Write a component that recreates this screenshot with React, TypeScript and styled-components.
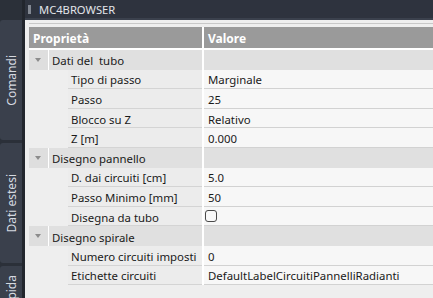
import React from "react";
import styled, { createGlobalStyle } from "styled-components";

const GlobalStyle = createGlobalStyle`
  html, body { margin: 0; padding: 0; overflow: hidden; }
  body { background: #2e333e; font-family: "Noto Sans", "Open Sans", sans-serif; }
`;

const Window = styled.div`
  display: flex;
  width: 433px;
  height: 298px;
  overflow: hidden;
`;

const Sidebar = styled.div`
  width: 22px;
  flex: none;
  display: flex;
  flex-direction: column;
  gap: 3px;
  padding-top: 20px;
  background: #2b3039;
  border-right: 3px solid #22262d;
`;

const Tab = styled.div<{ $h: number; $align?: string }>`
  height: ${(p) => p.$h}px;
  flex: none;
  background: #3a404c;
  border-radius: 3px 0 0 3px;
  display: flex;
  flex-direction: column;
  align-items: center;
  justify-content: ${(p) => p.$align || "center"};
  overflow: hidden;
`;

const TabText = styled.span<{ $pad?: number }>`
  writing-mode: vertical-rl;
  transform: rotate(180deg);
  color: #d5d9e0;
  font-size: 12px;
  white-space: nowrap;
  margin-top: ${(p) => p.$pad || 0}px;
`;

const Main = styled.div`
  flex: 1;
  display: flex;
  flex-direction: column;
  min-width: 0;
`;

const TitleBar = styled.div`
  height: 18px;
  flex: none;
  display: flex;
  align-items: center;
  gap: 8px;
  padding-left: 3px;
  background: #2e333e;
  border-bottom: 2px solid #3b414d;
`;

const Grip = styled.div`
  width: 3px;
  height: 9px;
  background-image: radial-gradient(circle, #8a909a 0.6px, transparent 0.9px);
  background-size: 1.5px 2px;
`;

const Title = styled.span`
  color: #e2e5ea;
  font-size: 11.2px;
  padding-top: 1px;
`;

const Panel = styled.div`
  flex: 1;
  background: #eeeeee;
  padding: 3px 0 0 4px;
`;

const GridBox = styled.div`
  border-top: 1px solid #c8c8c8;
  padding-top: 3px;
`;

const HeaderRow = styled.div`
  display: grid;
  grid-template-columns: 173px 1fr;
  column-gap: 2px;
  height: 21px;
  background: #ffffff;
  border-bottom: 2px solid #ffffff;
`;

const HeaderCell = styled.div`
  background: #9a9a9a;
  color: #ffffff;
  font-weight: bold;
  font-size: 12px;
  display: flex;
  align-items: center;
  padding: 1px 0 0 4px;
`;

const Row = styled.div`
  display: grid;
  grid-template-columns: 173px 1fr;
  column-gap: 2px;
  height: 19.6px;
  background: #ffffff;
`;

const GroupLeft = styled.div`
  display: grid;
  grid-template-columns: 19px 1fr;
  column-gap: 1px;
  background: #ffffff;
`;

const Gutter = styled.div`
  background: #dedede;
  display: flex;
  align-items: center;
  justify-content: center;
`;

const Triangle = styled.div`
  width: 0;
  height: 0;
  border-left: 3.5px solid transparent;
  border-right: 3.5px solid transparent;
  border-top: 4px solid #8c8c8c;
  margin-left: -2px;
`;

const cellText = `
  display: flex;
  align-items: center;
  font-size: 11.4px;
  color: #1a1a1a;
  white-space: nowrap;
  overflow: hidden;
  padding-top: 2px;
`;

const GroupCell = styled.div`
  ${cellText}
  background: #e0e0e0;
  padding-left: 3px;
  white-space: pre;
`;

const PropLeft = styled.div`
  background: #eeeeee;
  padding-left: 39px;
  display: flex;
`;

const NameCell = styled.div`
  ${cellText}
  flex: 1;
  background: #ececec;
  border-bottom: 1px solid #d4d4d4;
  padding-left: 3px;
`;

const ValueCell = styled.div`
  ${cellText}
  background: #f7f7f7;
  border-bottom: 1px solid #d2d2d2;
  padding-left: 4px;
`;

const Checkbox = styled.div`
  width: 10px;
  height: 10px;
  border: 1px solid #4a4a4a;
  border-radius: 3px;
  background: #f9f9f9;
  margin: -2px 0 0 -3px;
`;

type Prop = { name: string; value?: string; check?: boolean };
type Group = { title: string; props: Prop[] };

const groups: Group[] = [
  {
    title: "Dati del  tubo",
    props: [
      { name: "Tipo di passo", value: "Marginale" },
      { name: "Passo", value: "25" },
      { name: "Blocco su Z", value: "Relativo" },
      { name: "Z [m]", value: "0.000" },
    ],
  },
  {
    title: "Disegno pannello",
    props: [
      { name: "D. dai circuiti [cm]", value: "5.0" },
      { name: "Passo Minimo [mm]", value: "50" },
      { name: "Disegna da tubo", check: true },
    ],
  },
  {
    title: "Disegno spirale",
    props: [
      { name: "Numero circuiti imposti", value: "0" },
      { name: "Etichette circuiti", value: "DefaultLabelCircuitiPannelliRadianti" },
    ],
  },
];

export default function App() {
  return (
    <>
      <GlobalStyle />
      <Window>
        <Sidebar>
          <Tab $h={120}>
            <TabText>Comandi</TabText>
          </Tab>
          <Tab $h={120}>
            <TabText>Dati estesi</TabText>
          </Tab>
          <Tab $h={120} $align="flex-start">
            <TabText $pad={9}>Guida rapida</TabText>
          </Tab>
        </Sidebar>
        <Main>
          <TitleBar>
            <Grip />
            <Title>MC4BROWSER</Title>
          </TitleBar>
          <Panel>
            <GridBox>
              <HeaderRow>
                <HeaderCell>Proprietà</HeaderCell>
                <HeaderCell>Valore</HeaderCell>
              </HeaderRow>
              {groups.map((g) => (
                <React.Fragment key={g.title}>
                  <Row>
                    <GroupLeft>
                      <Gutter>
                        <Triangle />
                      </Gutter>
                      <GroupCell>{g.title}</GroupCell>
                    </GroupLeft>
                    <GroupCell />
                  </Row>
                  {g.props.map((p) => (
                    <Row key={p.name}>
                      <PropLeft>
                        <NameCell>{p.name}</NameCell>
                      </PropLeft>
                      <ValueCell>{p.check ? <Checkbox /> : p.value}</ValueCell>
                    </Row>
                  ))}
                </React.Fragment>
              ))}
            </GridBox>
          </Panel>
        </Main>
      </Window>
    </>
  );
}
